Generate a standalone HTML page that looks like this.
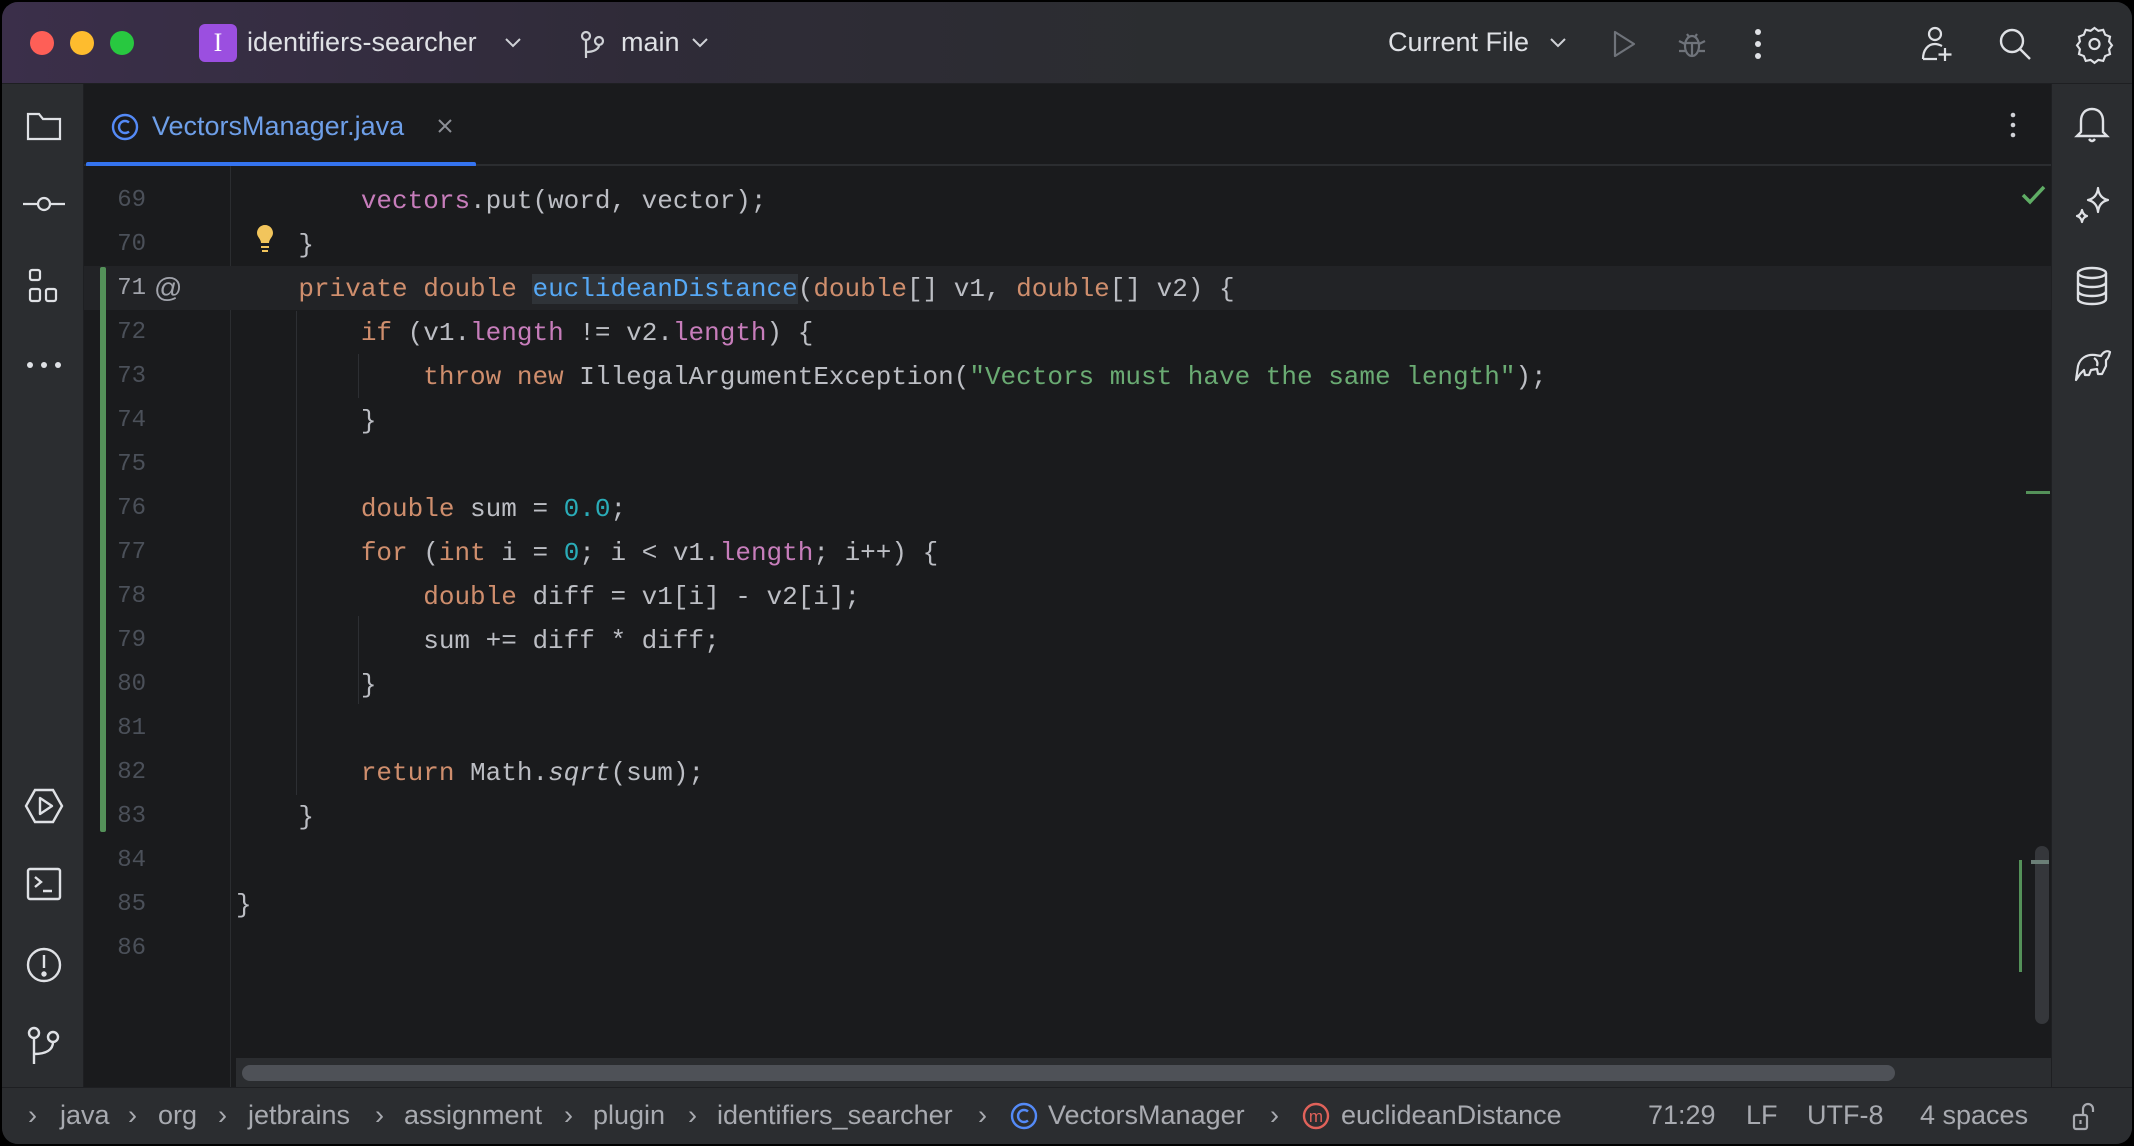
<!DOCTYPE html>
<html><head><meta charset="utf-8"><style>
*{margin:0;padding:0;box-sizing:border-box}
body{width:2134px;height:1146px;background:#000;overflow:hidden;font-family:"Liberation Sans",sans-serif;position:relative}
.win{position:absolute;left:2px;top:2px;width:2130px;height:1142px;border-radius:16px;overflow:hidden;background:#1e1f22}
.title{position:absolute;left:0;top:0;width:100%;height:82px;background:linear-gradient(90deg,#3b2f4a 0%,#2f2b38 30%,#2b2d30 55%,#2b2d30 100%);border-bottom:1px solid #1e1f22}
.abs{position:absolute}
.t{color:#dfe1e5;font-size:27px;position:absolute;white-space:nowrap}
.left{position:absolute;left:0;top:82px;width:82px;height:1003px;background:#2b2d30;border-right:1px solid #1e1f22}
.right{position:absolute;left:2049px;top:82px;width:81px;height:1003px;background:#2b2d30;border-left:1px solid #1e1f22}
.tabbar{position:absolute;left:82px;top:82px;width:1967px;height:82px;background:#1a1b1d;border-bottom:2px solid #2b2d30}
.editor{position:absolute;left:82px;top:164px;width:1967px;height:921px;background:#1a1b1d}
.code{position:absolute;font-family:"Liberation Mono",monospace;font-size:26px;color:#bcbec4;white-space:pre;line-height:44px;height:44px}
.ln{position:absolute;font-family:"Liberation Mono",monospace;font-size:24px;color:#4b5059;width:60px;text-align:right;left:84px;line-height:44px}
.k{color:#cf8e6d}.f{color:#c77dbb}.m{color:#56a8f5}.n{color:#2aacb8}.s{color:#6aab73}
.status{position:absolute;left:0;top:1085px;width:100%;height:57px;background:#2b2d30;border-top:1px solid #1e1f22}
.st{position:absolute;top:12px;color:#a8aab0;font-size:27px;white-space:nowrap}
svg{position:absolute;overflow:visible}
</style></head><body><div class="win">
<div class="title">
 <div class="abs" style="left:28px;top:29px;width:24px;height:24px;border-radius:50%;background:#fe5f57"></div>
 <div class="abs" style="left:68px;top:29px;width:24px;height:24px;border-radius:50%;background:#febc2e"></div>
 <div class="abs" style="left:108px;top:29px;width:24px;height:24px;border-radius:50%;background:#28c840"></div>
 <div class="abs" style="left:197px;top:22px;width:38px;height:38px;border-radius:6px;background:#9b4fe0;color:#fff;font:26px 'Liberation Serif',serif;text-align:center;line-height:38px">I</div>
 <div class="t" style="left:245px;top:25px">identifiers-searcher</div>
 <svg style="left:503px;top:36px" width="16" height="10"><path d="M1 1l7 7 7-7" stroke="#cfd1d6" stroke-width="2" fill="none"/></svg>
 <svg style="left:578px;top:28px" width="26" height="30" fill="none" stroke="#cfd1d6" stroke-width="2.2"><circle cx="6" cy="6" r="4"/><circle cx="19" cy="11" r="4"/><path d="M6 10v18M6 22c8 0 13-3 13-7"/></svg>
 <div class="t" style="left:619px;top:25px">main</div>
 <svg style="left:690px;top:36px" width="16" height="10"><path d="M1 1l7 7 7-7" stroke="#cfd1d6" stroke-width="2" fill="none"/></svg>
 <div class="t" style="left:1386px;top:25px">Current File</div>
 <svg style="left:1548px;top:36px" width="16" height="10"><path d="M1 1l7 7 7-7" stroke="#cfd1d6" stroke-width="2" fill="none"/></svg>
 <svg style="left:1610px;top:28px" width="24" height="28"><path d="M3 2v24l19-12z" stroke="#6f737a" stroke-width="2.2" fill="none" stroke-linejoin="round"/></svg>
 <svg style="left:1675px;top:27px" width="30" height="30" fill="none" stroke="#6f737a" stroke-width="2.2"><ellipse cx="15" cy="17" rx="7" ry="10"/><path d="M8 14h14M15 14v12M2 12l6 3M28 12l-6 3M2 22h6M28 22h-6M10 5l2 3M20 5l-2 3"/></svg>
 <svg style="left:1752px;top:26px" width="8" height="32" fill="#dfe1e5"><circle cx="4" cy="4" r="3"/><circle cx="4" cy="16" r="3"/><circle cx="4" cy="28" r="3"/></svg>
 <svg style="left:1918px;top:24px" width="34" height="36" fill="none" stroke="#dfe1e5" stroke-width="2.2"><circle cx="15" cy="8" r="6"/><path d="M3 33c0-9 5-15 12-15 3 0 5 1 7 2M3 33h14M25 22v13M18.5 28.5h13"/></svg>
 <svg style="left:1996px;top:25px" width="34" height="34" fill="none" stroke="#dfe1e5" stroke-width="2.4"><circle cx="14" cy="14" r="11"/><path d="M22 22l10 10"/></svg>
 <svg style="left:2076px;top:24px" width="34" height="36" fill="none" stroke="#dfe1e5" stroke-width="2.2"><path d="M17 2l4 3 5-1 2 5 5 2-1 5 3 4-3 4 1 5-5 2-2 5-5-1-4 3-4-3-5 1-2-5-5-2 1-5-3-4 3-4-1-5 5-2 2-5 5 1z" transform="scale(0.97)"/><circle cx="16.5" cy="18" r="5"/></svg>
</div>

<div class="left">
 <svg style="left:24px;top:27px" width="36" height="30" fill="none" stroke="#dfe1e5" stroke-width="2.2"><path d="M2 3h11l4 5h17v20H2z"/></svg>
 <svg style="left:20px;top:112px" width="44" height="16" fill="none" stroke="#dfe1e5" stroke-width="2.2"><circle cx="22" cy="8" r="6"/><path d="M1 8h15M28 8h15"/></svg>
 <svg style="left:26px;top:184px" width="32" height="36" fill="none" stroke="#dfe1e5" stroke-width="2.2"><rect x="2" y="2" width="10" height="10" rx="2"/><rect x="2" y="21" width="10" height="12" rx="2"/><rect x="18" y="21" width="10" height="12" rx="2"/></svg>
 <svg style="left:24px;top:277px" width="36" height="8" fill="#dfe1e5"><circle cx="4" cy="4" r="3"/><circle cx="18" cy="4" r="3"/><circle cx="32" cy="4" r="3"/></svg>
 <svg style="left:22px;top:704px" width="40" height="36" fill="none" stroke="#dfe1e5" stroke-width="2.4"><path d="M11 2h18l9 16-9 16H11L2 18z"/><path d="M16 10v16l12-8z" stroke-linejoin="round"/></svg>
 <svg style="left:24px;top:783px" width="36" height="34" fill="none" stroke="#dfe1e5" stroke-width="2.4"><rect x="2" y="2" width="32" height="30" rx="2"/><path d="M9 10l6 5-6 5M17 24h9"/></svg>
 <svg style="left:23px;top:862px" width="38" height="38" fill="none" stroke="#dfe1e5" stroke-width="2.4"><circle cx="19" cy="19" r="16"/><path d="M19 9v13"/><circle cx="19" cy="28" r="1.5" fill="#dfe1e5"/></svg>
 <svg style="left:25px;top:942px" width="34" height="40" fill="none" stroke="#dfe1e5" stroke-width="2.4"><circle cx="7" cy="7" r="5"/><circle cx="26" cy="11" r="5"/><path d="M7 12v26M7 28c12 0 19-4 19-12"/></svg>
</div>

<div class="right">
 <svg style="left:22px;top:22px" width="36" height="38" fill="none" stroke="#dfe1e5" stroke-width="2.4"><path d="M18 3c-7 0-11 5-11 12v11l-4 4h30l-4-4V15c0-7-4-12-11-12z"/><path d="M15 33q3 4 6 0"/></svg>
 <svg style="left:22px;top:102px" width="36" height="40" fill="none" stroke="#dfe1e5" stroke-width="2.2" stroke-linejoin="round"><path d="M24 2q1 10 10 12q-9 2-10 12q-1-10-10-12q9-2 10-12z"/><path d="M8 24q1 5 5 6q-4 1-5 6q-1-5-5-6q4-1 5-6z"/></svg>
 <svg style="left:23px;top:182px" width="34" height="40" fill="none" stroke="#dfe1e5" stroke-width="2.4"><ellipse cx="17" cy="7" rx="14" ry="5"/><path d="M3 7v26c0 3 6 5 14 5s14-2 14-5V7M3 16c0 3 6 5 14 5s14-2 14-5M3 25c0 3 6 5 14 5s14-2 14-5"/></svg>
 <svg style="left:21px;top:262px" width="40" height="36" fill="none" stroke="#dfe1e5" stroke-width="2.2" stroke-linejoin="round"><path d="M3 34l2-14c2-8 9-12 17-11l6 1c2-4 6-6 9-4-1 3-1 6-4 8v6l-4 8h-4l-1-5-6 1-2 5h-4l-1-5-4 4z"/><path d="M21 12c3 2 4 5 3 8"/></svg>
</div>

<div class="tabbar">
 <svg style="left:27px;top:29px" width="28" height="28" fill="none" stroke="#548af7" stroke-width="2.4"><circle cx="14" cy="14" r="12"/><path d="M18 9.5a6 6 0 1 0 0 9"/></svg>
 <div class="t" style="left:68px;top:27px;color:#6e9fe8">VectorsManager.java</div>
 <svg style="left:354px;top:35px" width="14" height="14" stroke="#8c8f96" stroke-width="2"><path d="M1 1l12 12M13 1L1 13"/></svg>
 <div class="abs" style="left:2px;top:78px;width:390px;height:5px;background:#3574f0;border-radius:2px"></div>
 <svg style="left:1926px;top:28px" width="6" height="26" fill="#cfd1d6"><circle cx="3" cy="3" r="2.3"/><circle cx="3" cy="13" r="2.3"/><circle cx="3" cy="23" r="2.3"/></svg>
</div>

<div class="editor">
 <div class="abs" style="left:146px;top:0;width:1px;height:921px;background:#2b2d30"></div>
 <div class="abs" style="left:0;top:100px;width:1967px;height:44px;background:#222326"></div>
 <div class="abs" style="left:16px;top:101px;width:6px;height:565px;background:#549159;border-radius:2px"></div>
 <svg style="left:1937px;top:18px" width="26" height="22"><path d="M2 11l7 7L23 3" stroke="#5fad65" stroke-width="3.5" fill="none"/></svg>
 <div class="abs" style="left:1942px;top:325px;width:24px;height:3px;background:#549159"></div>
 <div class="abs" style="left:1951px;top:680px;width:14px;height:178px;border-radius:7px;background:#35373b"></div>
 <div class="abs" style="left:1935px;top:694px;width:3px;height:112px;background:#549159"></div>
 <div class="abs" style="left:1947px;top:694px;width:18px;height:4px;background:#6b7f77"></div>
 <div class="abs" style="left:152px;top:892px;width:1815px;height:29px;background:#2b2d30"></div>
 <div class="abs" style="left:158px;top:899px;width:1653px;height:16px;border-radius:8px;background:#4e5157"></div>
 <div class="abs" style="left:212px;top:145px;width:1px;height:484px;background:#2d2f33"></div>
 <div class="abs" style="left:274px;top:188px;width:1px;height:44px;background:#2d2f33"></div>
 <div class="abs" style="left:274px;top:450px;width:1px;height:88px;background:#2d2f33"></div>
 <svg style="left:171px;top:58px" width="20" height="32"><path d="M10 1c-5 0-8 4-8 8 0 4 4 6 4 10h8c0-4 4-6 4-10 0-4-3-8-8-8z" fill="#f2c55c"/><path d="M6 23h8M7 27h6" stroke="#f2c55c" stroke-width="2"/></svg>
</div>

<div class="ln" style="top:177px">69</div>
<div class="ln" style="top:221px">70</div>
<div class="ln" style="top:265px;color:#a1a3ab">71</div>
<div class="abs" style="left:152px;top:270px;color:#a1a3ab;font:28px 'Liberation Sans',sans-serif">@</div>
<div class="ln" style="top:309px">72</div>
<div class="ln" style="top:353px">73</div>
<div class="ln" style="top:397px">74</div>
<div class="ln" style="top:441px">75</div>
<div class="ln" style="top:485px">76</div>
<div class="ln" style="top:529px">77</div>
<div class="ln" style="top:573px">78</div>
<div class="ln" style="top:617px">79</div>
<div class="ln" style="top:661px">80</div>
<div class="ln" style="top:705px">81</div>
<div class="ln" style="top:749px">82</div>
<div class="ln" style="top:793px">83</div>
<div class="ln" style="top:837px">84</div>
<div class="ln" style="top:881px">85</div>
<div class="ln" style="top:925px">86</div>

<div class="code" style="left:234px;top:177px">        <span class="f">vectors</span>.put(word, vector);</div>
<div class="code" style="left:234px;top:221px">    }</div>
<div class="code" style="left:234px;top:265px">    <span class="k">private double </span><span class="m" style="background:#2f3338">euclideanDistance</span>(<span class="k">double</span>[] v1, <span class="k">double</span>[] v2) {</div>
<div class="code" style="left:234px;top:309px">        <span class="k">if</span> (v1.<span class="f">length</span> != v2.<span class="f">length</span>) {</div>
<div class="code" style="left:234px;top:353px">            <span class="k">throw new</span> IllegalArgumentException(<span class="s">"Vectors must have the same length"</span>);</div>
<div class="code" style="left:234px;top:397px">        }</div>
<div class="code" style="left:234px;top:485px">        <span class="k">double</span> sum = <span class="n">0.0</span>;</div>
<div class="code" style="left:234px;top:529px">        <span class="k">for</span> (<span class="k">int</span> i = <span class="n">0</span>; i &lt; v1.<span class="f">length</span>; i++) {</div>
<div class="code" style="left:234px;top:573px">            <span class="k">double</span> diff = v1[i] - v2[i];</div>
<div class="code" style="left:234px;top:617px">            sum += diff * diff;</div>
<div class="code" style="left:234px;top:661px">        }</div>
<div class="code" style="left:234px;top:749px">        <span class="k">return</span> Math.<i>sqrt</i>(sum);</div>
<div class="code" style="left:234px;top:793px">    }</div>
<div class="code" style="left:234px;top:881px">}</div>

<div class="status">
 <div class="st" style="left:26px">›</div>
 <div class="st" style="left:58px">java</div>
 <div class="st" style="left:126px">›</div>
 <div class="st" style="left:156px">org</div>
 <div class="st" style="left:216px">›</div>
 <div class="st" style="left:246px">jetbrains</div>
 <div class="st" style="left:373px">›</div>
 <div class="st" style="left:402px">assignment</div>
 <div class="st" style="left:562px">›</div>
 <div class="st" style="left:591px">plugin</div>
 <div class="st" style="left:686px">›</div>
 <div class="st" style="left:715px">identifiers_searcher</div>
 <div class="st" style="left:976px">›</div>
 <svg style="left:1008px;top:14px" width="28" height="28" fill="none" stroke="#548af7" stroke-width="2.4"><circle cx="14" cy="14" r="12"/><path d="M18 9.5a6 6 0 1 0 0 9"/></svg>
 <div class="st" style="left:1046px">VectorsManager</div>
 <div class="st" style="left:1268px">›</div>
 <svg style="left:1300px;top:14px" width="28" height="28" fill="none" stroke="#e0625a" stroke-width="2.4"><circle cx="14" cy="14" r="12"/><text x="14" y="20" font-size="17" fill="#e0625a" stroke="none" text-anchor="middle" font-family="Liberation Sans">m</text></svg>
 <div class="st" style="left:1339px">euclideanDistance</div>
 <div class="st" style="left:1646px">71:29</div>
 <div class="st" style="left:1744px">LF</div>
 <div class="st" style="left:1805px">UTF-8</div>
 <div class="st" style="left:1918px">4 spaces</div>
 <svg style="left:2070px;top:14px" width="24" height="30" fill="none" stroke="#a8aab0" stroke-width="2.2"><rect x="2" y="13" width="13" height="14" rx="2"/><path d="M11 13V7a5 5 0 0 1 10 0v3M8.5 18v4"/></svg>
</div>
</div></body></html>
